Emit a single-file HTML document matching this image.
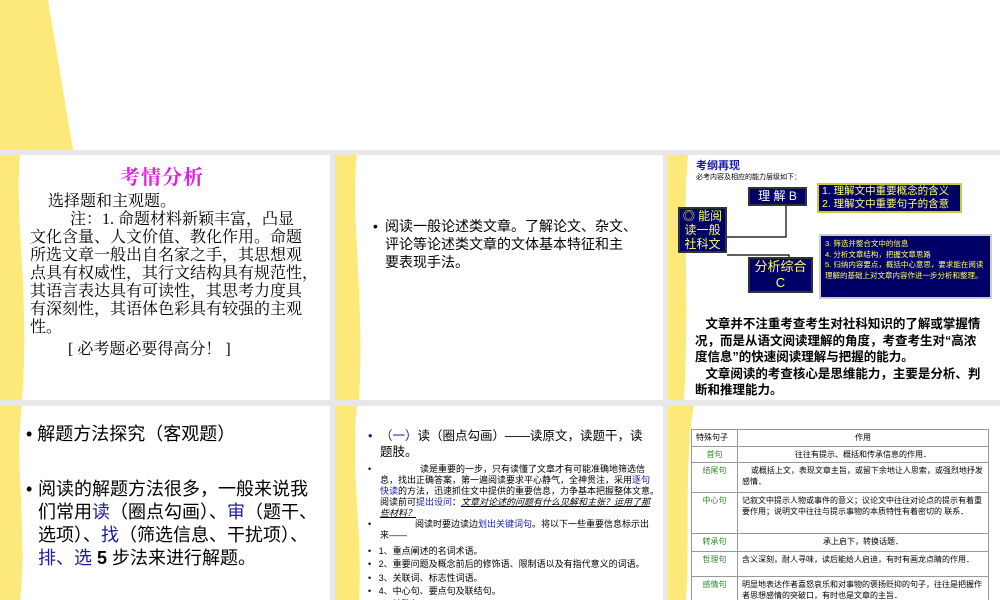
<!DOCTYPE html>
<html><head><meta charset="utf-8"><style>
*{margin:0;padding:0;box-sizing:border-box}
body{width:1000px;height:600px;background:#e8e8e8;position:relative;overflow:hidden;font-family:"Liberation Sans","Noto Sans CJK SC",sans-serif;color:#000}
.s{position:absolute;background:#fff;overflow:hidden}
.s svg.w{position:absolute;left:0;top:0}
.a{position:absolute;white-space:nowrap}
.serif{font-family:"Liberation Serif","Noto Serif CJK SC",serif}
.b{color:#1a1aa0}
.g{color:#2a8a2a}
.box{position:absolute;background:#000066;border:2px solid #333;color:#fff;text-align:center}
table{border-collapse:collapse;font-size:8px}
td{border:1px solid #999;padding:2px 4px;vertical-align:top;line-height:11px}
</style></head><body>
<div class="s" style="left:0;top:0;width:1000px;height:150px">
<svg class="w" width="80" height="150"><path d="M0 0 H48 L73 150 H0Z" fill="#fde97a"/></svg>
</div>

<div class="s" style="left:0;top:155px;width:330px;height:245px">
<svg class="w" width="40" height="245"><path d="M0 0 H20 C14 60 30 140 22 245 H0Z" fill="#fde97a"/></svg>
<div class="a serif" style="left:120px;top:6px;font-size:20px;color:#e020e0;font-weight:bold;letter-spacing:1px">考情分析</div>
<div class="serif" style="position:absolute;left:30px;top:38px;width:300px;font-size:16px;line-height:18px;white-space:nowrap">
<div style="padding-left:18px">选择题和主观题。</div>
<div style="padding-left:40px">注：1. 命题材料新颖丰富，凸显</div>
<div>文化含量、人文价值、教化作用。命题<br>所选文章一般出自名家之手，其思想观<br>点具有权威性，其行文结构具有规范性，<br>其语言表达具有可读性，其思考力度具<br>有深刻性，其语体色彩具有较强的主观<br>性。</div>
<div style="padding-left:38px;margin-top:4px">[ 必考题必要得高分！ ]</div>
</div>
</div>

<div class="s" style="left:335px;top:155px;width:328px;height:245px">
<svg class="w" width="40" height="245"><path d="M0 0 H22 C15 60 30 140 24 245 H0Z" fill="#fde97a"/></svg>
<div class="a" style="left:38px;top:62px;font-size:14px;line-height:18px;padding-left:12px">
<span style="position:absolute;left:0">•</span>阅读一般论述类文章。了解论文、杂文、<br>评论等论述类文章的文体基本特征和主<br>要表现手法。</div>
</div>

<div class="s" style="left:668px;top:155px;width:332px;height:245px">
<svg class="w" width="40" height="245"><path d="M0 0 H20 C14 60 22 140 16 245 H0Z" fill="#fde97a"/></svg>
<div class="a" style="left:28px;top:2px;font-size:11px;font-weight:bold;color:#1a1aa0">考纲再现</div>
<div class="a" style="left:28px;top:17px;font-size:7px">必考内容及相应的能力层级如下：</div>
<svg style="position:absolute;left:0;top:0" width="332" height="245"><path d="M59 82 H118 V50 M59 100 H121 V115" stroke="#000" stroke-width="1.2" fill="none"/></svg>
<div class="box" style="left:80px;top:32px;width:59px;height:19px;font-size:12px;line-height:15px">理 解 B</div>
<div class="box" style="left:149px;top:28px;width:145px;height:30px;font-size:10.5px;line-height:13px;text-align:left;padding-left:3px;border-color:#cc3;color:#ff6">1. 理解文中重要概念的含义<br>2. 理解文中重要句子的含意</div>
<div class="box" style="left:10px;top:52px;width:49px;height:46px;font-size:12px;line-height:14px;color:#ff6">◎ 能阅<br>读一般<br>社科文</div>
<div class="box" style="left:80px;top:102px;width:65px;height:36px;font-size:13px;line-height:16px;color:#ff6">分析综合<br>C</div>
<div class="box" style="left:151px;top:79px;width:173px;height:65px;font-size:7.5px;line-height:10.5px;text-align:left;padding:3px 4px;border-color:#ccc;color:#ff6;white-space:normal">3. 筛选并整合文中的信息<br>4. 分析文章结构，把握文章思路<br>5. 归纳内容要点，概括中心意思，要求能在阅读理解的基础上对文章内容作进一步分析和整理。</div>
<div style="position:absolute;left:27px;top:161px;width:305px;font-size:12.5px;line-height:16.5px;font-weight:bold;white-space:nowrap">
<div>&nbsp;&nbsp;&nbsp;文章并不注重考查考生对社科知识的了解或掌握情<br>况，而是从语文阅读理解的角度，考查考生对“高浓<br>度信息”的快速阅读理解与把握的能力。</div>
<div>&nbsp;&nbsp;&nbsp;文章阅读的考查核心是思维能力，主要是分析、判<br>断和推理能力。</div></div>
</div>

<div class="s" style="left:0;top:406px;width:330px;height:194px">
<svg class="w" width="40" height="194"><path d="M0 0 H22 C14 60 28 130 20 194 H0Z" fill="#fde97a"/></svg>
<div class="a" style="left:26px;top:14px;font-size:18px">• 解题方法探究（客观题）</div>
<div class="a" style="left:26px;top:72px;font-size:18px;line-height:23px;padding-left:12px">
<span style="position:absolute;left:0">•</span>阅读的解题方法很多，一般来说我<br>们常用<span class="b">读</span>（圈点勾画）、<span class="b">审</span>（题干、<br>选项）、<span class="b">找</span>（筛选信息、干扰项）、<br><span class="b">排、选</span> <b>5</b> 步法来进行解题。</div>
</div>

<div class="s" style="left:335px;top:406px;width:328px;height:194px">
<svg class="w" width="40" height="194"><path d="M0 0 H22 C15 60 28 130 24 194 H0Z" fill="#fde97a"/></svg>
<div class="a" style="left:33px;top:22px;font-size:12.5px;line-height:16px;padding-left:12px">
<span class="b" style="position:absolute;left:0">•</span><span class="b">（一）</span>读（圈点勾画）——读原文，读题干，读<br>题肢。</div>
<div class="a" style="left:33px;top:58px;font-size:9px;line-height:11px;padding-left:12px">
<span style="position:absolute;left:0">•</span><span style="padding-left:40px">读是重要的一步，只有读懂了文章才有可能准确地筛选信</span><br>息，找出正确答案，第一遍阅读要求平心静气，全神贯注，采用<span class="b">逐句</span><br><span class="b">快读</span>的方法，迅速抓住文中提供的重要信息，力争基本把握整体文意。<br>阅读前可<span class="b">提出设问</span>：<u><i>文章对论述的问题有什么见解和主张？运用了那</i></u><br><u><i>些材料？</i></u></div>
<div class="a" style="left:33px;top:113px;font-size:9px;line-height:11px;padding-left:12px">
<span style="position:absolute;left:0">•</span><span style="padding-left:35px">阅读时要边读边<span class="b">划出关键词句</span>。将以下一些重要信息标示出</span><br>来——</div>
<div class="a" style="left:33px;top:139px;font-size:9px;line-height:13.3px">
<div>•&nbsp;&nbsp; 1、重点阐述的名词术语。</div>
<div>•&nbsp;&nbsp; 2、重要问题及概念前后的修饰语、限制语以及有指代意义的词语。</div>
<div>•&nbsp;&nbsp; 3、关联词、标志性词语。</div>
<div>•&nbsp;&nbsp; 4、中心句、要点句及联结句。</div>
<div>•&nbsp;&nbsp; 5、特殊句</div></div>
</div>

<div class="s" style="left:668px;top:406px;width:332px;height:194px">
<svg class="w" width="40" height="194"><path d="M0 0 H26 C16 50 22 130 18 194 H0Z" fill="#fde97a"/></svg>
<table style="position:absolute;left:23px;top:23px;width:298px">
<tr style="height:17px"><td style="width:46px">特殊句子</td><td style="text-align:center">作用</td></tr>
<tr style="height:15px"><td class="g" style="text-align:center">首句</td><td style="text-align:center">往往有提示、概括和传承信息的作用．</td></tr>
<tr style="height:30px"><td class="g" style="text-align:center">结尾句</td><td>&nbsp;&nbsp;&nbsp;&nbsp;或概括上文，表现文章主旨，或留下余地让人思索，或强烈地抒发感情．</td></tr>
<tr style="height:41px"><td class="g" style="text-align:center">中心句</td><td>记叙文中提示人物或事件的意义；议论文中往往对论点的提示有着重要作用；说明文中往往与提示事物的本质特性有着密切的 联系．</td></tr>
<tr style="height:18px"><td class="g" style="text-align:center">转承句</td><td style="text-align:center">承上启下，转换话题．</td></tr>
<tr style="height:25px"><td class="g" style="text-align:center">哲理句</td><td>含义深刻，耐人寻味，读后能给人启迪，有时有画龙点睛的作用．</td></tr>
<tr style="height:28px"><td class="g" style="text-align:center">感情句</td><td>明显地表达作者喜怒哀乐和对事物的褒扬贬抑的句子，往往是把握作者思想感情的突破口，有时也是文章的主旨．</td></tr>
</table>
</div>
</body></html>
